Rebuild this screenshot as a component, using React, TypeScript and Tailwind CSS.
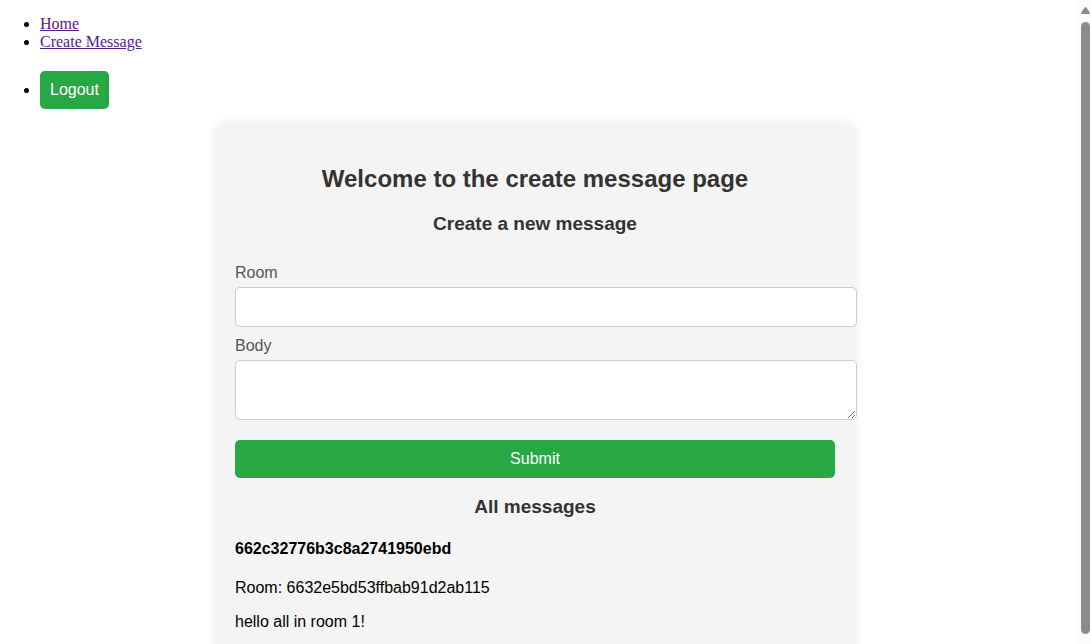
import React from "react";

type Message = { id: string; room: string; body: string };

const messages: Message[] = [
  {
    id: "662c32776b3c8a2741950ebd",
    room: "6632e5bd53ffbab91d2ab115",
    body: "hello all in room 1!",
  },
];

const fieldClass =
  "block w-[calc(100%+22px)] rounded-[5px] border border-[#ccc] bg-white p-2.5 text-base leading-[18px] text-black";

function Nav() {
  return (
    <nav className="pt-[15px] pb-[15px] font-['Liberation_Serif',serif] text-base leading-[18px]">
      <ul className="list-disc pl-10">
        <li>
          <a href="#home" className="text-[#551a8b] underline">
            Home
          </a>
        </li>
        <li>
          <a href="#create" className="text-[#551a8b] underline">
            Create Message
          </a>
        </li>
        <li className="pt-5">
          <button
            type="button"
            className="rounded-[5px] bg-[#28a745] p-2.5 align-baseline font-['Liberation_Sans',sans-serif] text-base leading-[18px] text-white"
          >
            Logout
          </button>
        </li>
      </ul>
    </nav>
  );
}

function MessageForm() {
  return (
    <form className="pt-[30px]" onSubmit={(event) => event.preventDefault()}>
      <label htmlFor="room" className="mb-[5px] block text-[#555]">
        Room
      </label>
      <input id="room" type="text" className={`${fieldClass} h-10`} />
      <label htmlFor="body" className="mt-2.5 mb-[5px] block text-[#555]">
        Body
      </label>
      <textarea id="body" rows={2} className={`${fieldClass} h-[60px] resize`} />
      <button
        type="submit"
        className="mt-5 block w-full rounded-[5px] bg-[#28a745] p-2.5 text-base leading-[18px] text-white"
      >
        Submit
      </button>
    </form>
  );
}

function ScrollTrack() {
  return (
    <div aria-hidden="true" className="flex w-[13px] flex-col items-center bg-[#fcfcfc] pt-[7px] pb-2.5 pl-px">
      <svg width="9" height="7" viewBox="0 0 9 7" fill="#8b8b8b">
        <path d="M3.6.6Q4.5-.4 5.4.6L8.8 5.6Q9.2 7 8 7H1Q-.2 7 .2 5.6Z" />
      </svg>
      <div className="mt-2 w-[9px] flex-1 rounded-full bg-[#8b8b8b]" />
    </div>
  );
}

export default function App() {
  return (
    <div className="flex h-screen overflow-hidden bg-white text-black">
      <div className="mr-2 min-w-0 flex-1 overflow-hidden">
        <Nav />
        <main className="mx-auto max-w-[640px] rounded-[10px] bg-[#f4f4f4] p-5 font-['Liberation_Sans',sans-serif] text-base leading-[18px] shadow-[0_0_10px_rgba(0,0,0,0.1)]">
          <h2 className="mt-[21px] text-center text-2xl leading-[27px] font-bold text-[#333]">
            Welcome to the create message page
          </h2>
          <h3 className="mt-[21px] text-center text-[19px] leading-[21px] font-bold text-[#333]">
            Create a new message
          </h3>
          <MessageForm />
          <h3 className="mt-[18px] text-center text-[19px] leading-[21px] font-bold text-[#333]">
            All messages
          </h3>
          {messages.map((message) => (
            <article key={message.id} className="pb-5">
              <h4 className="mt-[23px] font-bold">{message.id}</h4>
              <p className="mt-[21px]">Room: {message.room}</p>
              <p className="mt-4">{message.body}</p>
            </article>
          ))}
        </main>
      </div>
      <ScrollTrack />
    </div>
  );
}
